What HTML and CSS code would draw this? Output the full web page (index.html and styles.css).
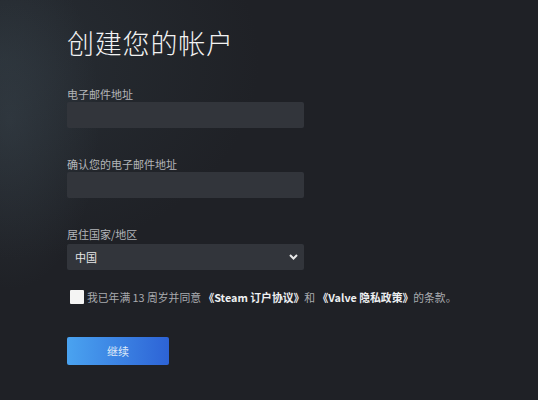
FILE: index.html
```html
<!DOCTYPE html>
<html lang="zh-CN">
<head>
<meta charset="utf-8">
<title>创建您的帐户</title>
<link rel="stylesheet" href="styles.css">
</head>
<body>
<main class="page">
  <h1 class="title">创建您的帐户</h1>
  <div class="field">
    <label class="label">电子邮件地址</label>
    <div class="input"></div>
  </div>
  <div class="field">
    <label class="label">确认您的电子邮件地址</label>
    <div class="input"></div>
  </div>
  <div class="field field-select">
    <label class="label">居住国家/地区</label>
    <div class="input select">
      <span class="select-value">中国</span>
      <svg class="chevron" width="9" height="6" viewBox="0 0 9 6"><path d="M1 1 L4.5 4.5 L8 1" fill="none" stroke="#e8e8e8" stroke-width="2"/></svg>
    </div>
  </div>
  <div class="agree">
    <span class="checkbox"></span>
    <span class="agree-text">我已年满 13 周岁并同意 <b class="link">《Steam 订户协议》</b>和 <b class="link">《Valve 隐私政策》</b>的条款。</span>
  </div>
  <button class="btn">继续</button>
</main>
</body>
</html>
```
FILE: styles.css
```css
html, body {
  margin: 0;
  height: 100%;
}
body {
  background:
    radial-gradient(ellipse 90px 170px at 10px 120px, rgba(70,85,95,0.3), rgba(70,85,95,0) 100%),
    radial-gradient(ellipse 260px 200px at 0 60px, rgba(48,58,66,0.5), rgba(48,58,66,0) 100%),
    #1f2126;
  font-family: "Noto Sans CJK SC", "Noto Sans", sans-serif;
  color: #b6b8bc;
  overflow: hidden;
}
.page {
  padding: 27px 0 0 67px;
  width: 237px;
}
.title {
  margin: 0 0 28px;
  font-size: 27px;
  line-height: 32px;
  font-weight: 300;
  color: #f2f2f2;
  letter-spacing: 0.8px;
}
.field {
  margin-bottom: 29px;
}
.label {
  display: block;
  font-size: 11px;
  line-height: 14px;
  margin-bottom: 1px;
  color: #b3b5b9;
}
.input {
  height: 26px;
  background: #32353b;
  border-radius: 2px;
}
.field-select {
  margin-bottom: 19px;
}
.field-select .label {
  margin-bottom: 3px;
}
.select {
  display: flex;
  align-items: center;
  justify-content: space-between;
  padding: 0 6px 0 8px;
}
.select-value {
  font-size: 11px;
  color: #e6e6e6;
}
.chevron {
  display: block;
}
.agree {
  display: flex;
  align-items: center;
  gap: 3px;
  white-space: nowrap;
  margin-left: 3px;
}
.checkbox {
  width: 14px;
  height: 14px;
  background: #f4f4f4;
  border-radius: 1px;
  flex: none;
}
.agree-text {
  font-size: 10.8px;
  line-height: 16px;
  color: #a9abaf;
}
.link {
  color: #eef0f2;
  font-weight: 700;
}
.btn {
  margin-top: 32px;
  width: 102px;
  height: 28px;
  border: 0;
  border-radius: 2px;
  background: linear-gradient(90deg, #4aa3f0 0%, #2d63d6 100%);
  color: #dbe8f8;
  font-family: "Noto Sans CJK SC", "Noto Sans", sans-serif;
  font-size: 11px;
  padding: 0;
}
```
